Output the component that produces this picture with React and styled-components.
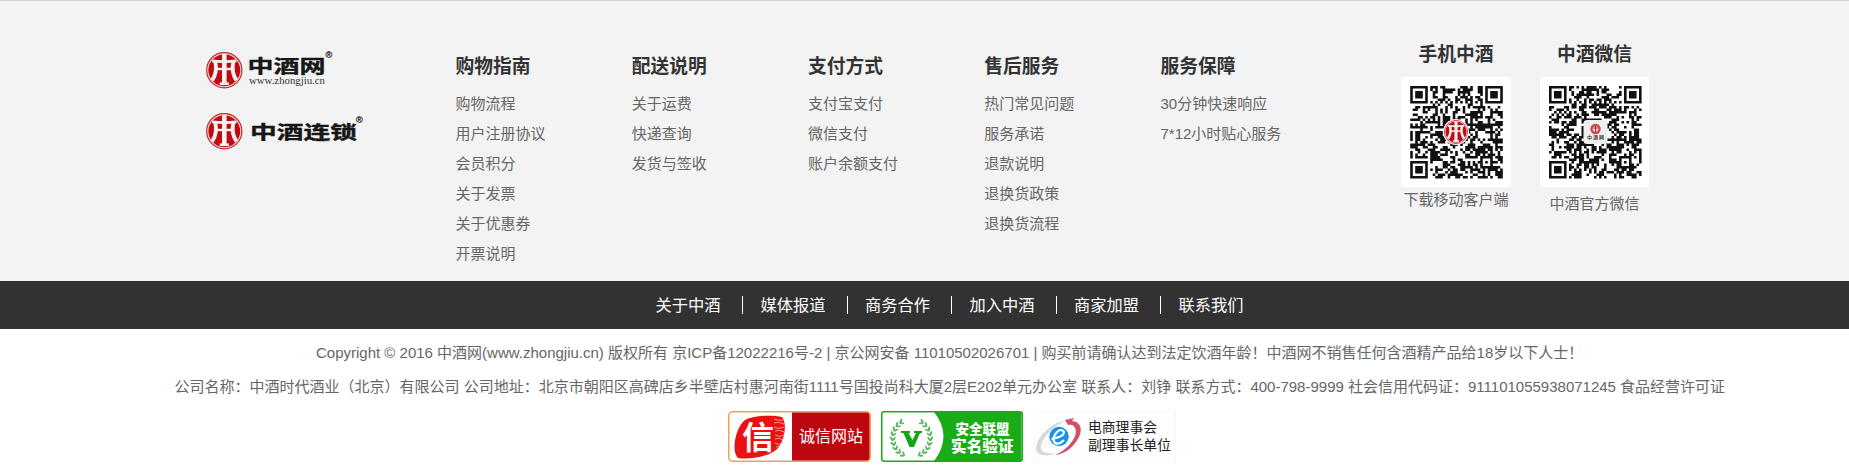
import React from "react";
import styled, { createGlobalStyle } from "styled-components";

const GlobalStyle = createGlobalStyle`
  body {
    margin: 0;
    background: #fff;
    overflow: hidden;
    font-family: "Liberation Sans", "Noto Sans CJK SC", sans-serif;
    font-size: 15px;
    color: #666;
  }
`;

const Footer = styled.footer`
  width: 1849px;
  height: 467px;
  overflow: hidden;
`;

const Guide = styled.section`
  box-sizing: border-box;
  display: flex;
  align-items: flex-start;
  height: 281px;
  border-top: 1px solid #d2d2d2;
  background: #f3f3f3;
  padding-left: 200px;
`;

const Logos = styled.div`
  display: flex;
  flex-direction: column;
  width: 255.5px;
  padding-top: 44px;
`;

const LogoSvg = styled.svg`
  display: block;
  width: 190px;
  height: 61px;
`;

const Column = styled.div`
  width: 176.25px;
  padding-top: 50px;
`;

const Title = styled.h3`
  margin: 0;
  font-size: 18.75px;
  line-height: 32px;
  font-weight: 700;
  color: #333;
  white-space: nowrap;
`;

const Links = styled.ul`
  list-style: none;
  margin: 6px 0 0;
  padding: 0;
`;

const LinkItem = styled.li`
  line-height: 30px;
  height: 30px;
  white-space: nowrap;
`;

const Codes = styled.div`
  display: flex;
  gap: 29px;
  padding: 38px 0 0 64.25px;
`;

const Code = styled.div`
  width: ${(p) => p.$width}px;
  text-align: center;
`;

const QrBox = styled.svg`
  display: block;
  width: 100%;
  height: 110px;
  margin-top: 6px;
  background: #fff;
`;

const Caption = styled.div`
  margin: ${(p) => p.$gap}px -10px 0;
  line-height: 24px;
`;

const NavBar = styled.nav`
  box-sizing: border-box;
  display: flex;
  align-items: center;
  height: 48px;
  padding-left: 655.5px;
  background: #323232;
`;

const NavLink = styled.a`
  box-sizing: border-box;
  display: block;
  width: 104.5px;
  padding-left: ${(p) => (p.$first ? 0 : 17)}px;
  margin-right: ${(p) => (p.$first ? -17.6 : 0)}px;
  border-left: ${(p) => (p.$first ? "none" : "1px solid #fff")};
  height: 18px;
  line-height: 18px;
  font-size: 16.25px;
  color: #fff;
  white-space: nowrap;
`;

const Legal = styled.div`
  display: flex;
  flex-direction: column;
  padding-top: 7px;
`;

const LegalLine = styled.p`
  margin: 0 0 0 ${(p) => p.$indent}px;
  line-height: 34px;
  height: 34px;
  white-space: nowrap;
`;

const Badges = styled.div`
  display: flex;
  gap: 10px;
  padding: 7px 0 0 728px;
`;

const BadgeSvg = styled.svg`
  display: block;
  width: 143px;
  height: 51px;
`;

const cjk = '"Noto Sans CJK SC", sans-serif';

function Emblem({ x, y, r = 18 }) {
  return (
    <g transform={`translate(${x} ${y}) scale(${r / 18})`}>
      <circle r="17.4" fill="#f8e4e4" stroke="#c8242a" strokeWidth="1.2" />
      <circle r="15.8" fill="#c20a12" />
      <g fill="none" stroke="#f8f3f3">
        <path d="M0-16V14" strokeWidth="4.6" />
        <path d="M-12-9.2Q0-7.8 12-9.2" strokeWidth="2.6" />
        <path d="M-8-1.2H8" strokeWidth="2.4" />
        <path d="M-9-9Q-6.5 2-12 10M9-9Q6.5 2 12 10" strokeWidth="3.8" />
        <path d="M-4.5 13.4H4.5" strokeWidth="2.6" />
      </g>
    </g>
  );
}

function Logo({ name, nameX, nameWidth, baseline, scaleY, markX, markY, site }) {
  return (
    <LogoSvg viewBox="0 0 190 61">
      <Emblem x={24.3} y={25.2} r={18.2} />
      <text
        transform={`translate(${nameX} ${baseline}) scale(1 ${scaleY})`}
        fontFamily={cjk}
        fontWeight="700"
        fontSize="24.5"
        fill="#171717"
        stroke="#171717"
        strokeWidth=".5"
        strokeLinejoin="round"
        textLength={nameWidth}
        lengthAdjust="spacingAndGlyphs"
      >
        {name}
      </text>
      {site && (
        <text x="49" y="38.5" fontFamily='"Liberation Serif", serif' fontSize="11" fill="#333" textLength="76" lengthAdjust="spacingAndGlyphs">
          {site}
        </text>
      )}
      <text x={markX} y={markY} fontSize="9" fontFamily='"Liberation Sans", sans-serif' fill="#222" stroke="#222" strokeWidth=".25">®</text>
    </LogoSvg>
  );
}

const SIZE = 37;

function inSquare(x, y, left, top, side) {
  return x >= left && y >= top && x < left + side && y < top + side;
}

function finderDark(x, y, left, top) {
  const d = Math.max(Math.abs(x - left - 3), Math.abs(y - top - 3));
  return d === 3 || d < 2;
}

function qrPath(seed) {
  let s = seed;
  let d = "";
  for (let y = 0; y < SIZE; y += 1) {
    for (let x = 0; x < SIZE; x += 1) {
      s = (Math.imul(s, 1664525) + 1013904223) >>> 0;
      let dark = ((s >>> 16) & 255) < 134;
      if (inSquare(x, y, 0, 0, 8)) dark = x < 7 && y < 7 && finderDark(x, y, 0, 0);
      else if (inSquare(x, y, 29, 0, 8)) dark = x > 29 && y < 7 && finderDark(x, y, 30, 0);
      else if (inSquare(x, y, 0, 29, 8)) dark = x < 7 && y > 29 && finderDark(x, y, 0, 30);
      else if (inSquare(x, y, 28, 28, 5)) dark = Math.max(Math.abs(x - 30), Math.abs(y - 30)) !== 1;
      else if (x === 6) dark = y % 2 === 0;
      else if (y === 6) dark = x % 2 === 0;
      if (dark) d += `M${x} ${y}h1.04v1.04h-1.04z`;
    }
  }
  return d;
}

function QrCode({ seed, card }) {
  return (
    <QrBox viewBox={card ? "0 0 109 110" : "0 0 110 110"}>
      <path d={qrPath(seed)} fill="#111" transform={`translate(${card ? 9 : 9.2} 9) scale(2.5)`} />
      {card ? (
        <g>
          <rect x="43.5" y="43" width="24" height="24" rx="3.5" fill="#eee" />
          <circle cx="55.5" cy="52" r="5.2" fill="#c94850" />
          <circle cx="55.5" cy="52" r="2.8" fill="#f4dede" />
          <path d="M53 51h5M55.5 49v6" stroke="#b32932" strokeWidth="1" />
          <text x="47" y="62" fontSize="5" fontFamily={cjk} fontWeight="700" fill="#444" textLength="17">中酒网</text>
        </g>
      ) : (
        <g>
          <circle cx="55" cy="55" r="13" fill="#fff" />
          <Emblem x={55} y={55} r={12} />
        </g>
      )}
    </QrBox>
  );
}

function IntegrityBadge() {
  return (
    <BadgeSvg viewBox="0 0 143 51">
      <rect x=".75" y=".75" width="141.5" height="49.5" rx="4" fill="#fff" stroke="#f5a04c" strokeWidth="1.5" />
      <path d="M64 1.5H138.5Q141.5 1.5 141.5 4.5V46.5Q141.5 49.5 138.5 49.5H64Z" fill="#bd0610" />
      <path d="M17 9C27 4 44 4 54 6C59 12 57 27 51 36C44 45 23 49 10 47C3 41 7 17 17 9Z" fill="#ec1111" />
      <path d="M46 8q4 2 9 1M46 12q4-2 10 1M46 16q5 3 10 0M47 20q4-2 9 1M47 24q5 3 9 0M47 28q4-2 8 1M47 32q4 3 7 0M48 36l4-1" fill="none" stroke="#fff" strokeWidth=".8" opacity=".7" />
      <text x="14" y="38" fontFamily={cjk} fontWeight="700" fontSize="32" fill="#fff">信</text>
      <text x="71" y="31" fontFamily={cjk} fontWeight="400" fontSize="16" fill="#fff" textLength="64">诚信网站</text>
    </BadgeSvg>
  );
}

const LEAVES = [-60, -45, -30, -15, 0, 15, 30, 45, 60];

function AllianceBadge() {
  return (
    <BadgeSvg viewBox="0 0 143 51">
      <rect x=".75" y=".75" width="140.5" height="49.5" rx="2.5" fill="#fff" stroke="#1caa1c" strokeWidth="1.5" />
      <path d="M53 1Q72 25 53 50H140.5V1Z" fill="#1aab19" />
      {[1, -1].map((side) => (
        <g key={side} transform={`translate(30.5 27) scale(${side} 1)`} fill="#5cb760">
          {LEAVES.map((a) => (
            <g key={a} transform={`rotate(${a}) translate(18.6 0)`}>
              <ellipse cx="1.5" rx="1.1" ry="2.7" transform="rotate(35)" />
              <ellipse cx="-1.5" rx=".9" ry="2.3" transform="rotate(-35)" />
            </g>
          ))}
        </g>
      ))}
      <path d="M20 20H29V22H27.5L31.5 29L35 22H33V20H41V22H39L33 36H28.5L22.5 22H20Z" fill="#12a616" />
      <text x="74.5" y="22.5" fontFamily={cjk} fontWeight="900" fontSize="13.5" fill="#fff" textLength="54">安全联盟</text>
      <text x="70" y="40.5" fontFamily={cjk} fontWeight="900" fontSize="15.6" fill="#fff" textLength="62.5">实名验证</text>
    </BadgeSvg>
  );
}

function CouncilBadge() {
  return (
    <BadgeSvg viewBox="0 0 143 51">
      <rect x=".5" y=".5" width="141" height="50" fill="#fefefe" stroke="#f8f8f8" />
      <path d="M31 10C17 11 2 27 2 38C3 45 13 46 22 42C12 43 6 41 7 35C8 27 19 15 31 10Z" fill="#d8d8dc" />
      <path d="M31 9L40 7L38 10C49 11 49 22 42 31C37 38 30 43 21 44C35 38 45 24 41 17C40 14 37 13 34 14Z" fill="#cf5268" />
      <circle cx="25" cy="25.5" r="9.7" fill="#1593e8" />
      <path d="M17.5 28Q30 26 30 21Q27 17 23 21Q17 28 21 32Q25 34 30 29" fill="none" stroke="#fff" strokeWidth="2.2" />
      <text x="54" y="21" fontFamily={cjk} fontWeight="400" fontSize="14" fill="#222" textLength="69" lengthAdjust="spacingAndGlyphs">电商理事会</text>
      <text x="54" y="39" fontFamily={cjk} fontWeight="400" fontSize="14" fill="#222" textLength="83" lengthAdjust="spacingAndGlyphs">副理事长单位</text>
    </BadgeSvg>
  );
}

const COLUMNS = [
  { title: "购物指南", links: ["购物流程", "用户注册协议", "会员积分", "关于发票", "关于优惠券", "开票说明"] },
  { title: "配送说明", links: ["关于运费", "快递查询", "发货与签收"] },
  { title: "支付方式", links: ["支付宝支付", "微信支付", "账户余额支付"] },
  { title: "售后服务", links: ["热门常见问题", "服务承诺", "退款说明", "退换货政策", "退换货流程"] },
  { title: "服务保障", links: ["30分钟快速响应", "7*12小时贴心服务"] },
];

const NAV = ["关于中酒", "媒体报道", "商务合作", "加入中酒", "商家加盟", "联系我们"];

export default function App() {
  return (
    <Footer>
      <GlobalStyle />
      <Guide>
        <Logos>
          <Logo name="中酒网" nameX={47.5} nameWidth={78} baseline={27.5} scaleY={0.72} markX={125.5} markY={13} site="www.zhongjiu.cn" />
          <Logo name="中酒连锁" nameX={50} nameWidth={107} baseline={32.5} scaleY={0.75} markX={156} markY={17} />
        </Logos>
        {COLUMNS.map((c) => (
          <Column key={c.title}>
            <Title>{c.title}</Title>
            <Links>
              {c.links.map((l) => (
                <LinkItem key={l}>{l}</LinkItem>
              ))}
            </Links>
          </Column>
        ))}
        <Codes>
          <Code $width={110}>
            <Title>手机中酒</Title>
            <QrCode seed={20163} />
            <Caption $gap={1}>下载移动客户端</Caption>
          </Code>
          <Code $width={109}>
            <Title>中酒微信</Title>
            <QrCode seed={77141} card />
            <Caption $gap={5}>中酒官方微信</Caption>
          </Code>
        </Codes>
      </Guide>
      <NavBar>
        {NAV.map((n, i) => (
          <NavLink key={n} $first={i === 0}>{n}</NavLink>
        ))}
      </NavBar>
      <Legal>
        <LegalLine $indent={316}>
          Copyright © 2016 中酒网(www.zhongjiu.cn) 版权所有 京ICP备12022216号-2 | 京公网安备 11010502026701 | 购买前请确认达到法定饮酒年龄！中酒网不销售任何含酒精产品给18岁以下人士！
        </LegalLine>
        <LegalLine $indent={174.5}>
          公司名称：中酒时代酒业（北京）有限公司 公司地址：北京市朝阳区高碑店乡半壁店村惠河南街1111号国投尚科大厦2层E202单元办公室 联系人：刘铮 联系方式：400-798-9999 社会信用代码证：911101055938071245 食品经营许可证
        </LegalLine>
      </Legal>
      <Badges>
        <IntegrityBadge />
        <AllianceBadge />
        <CouncilBadge />
      </Badges>
    </Footer>
  );
}
